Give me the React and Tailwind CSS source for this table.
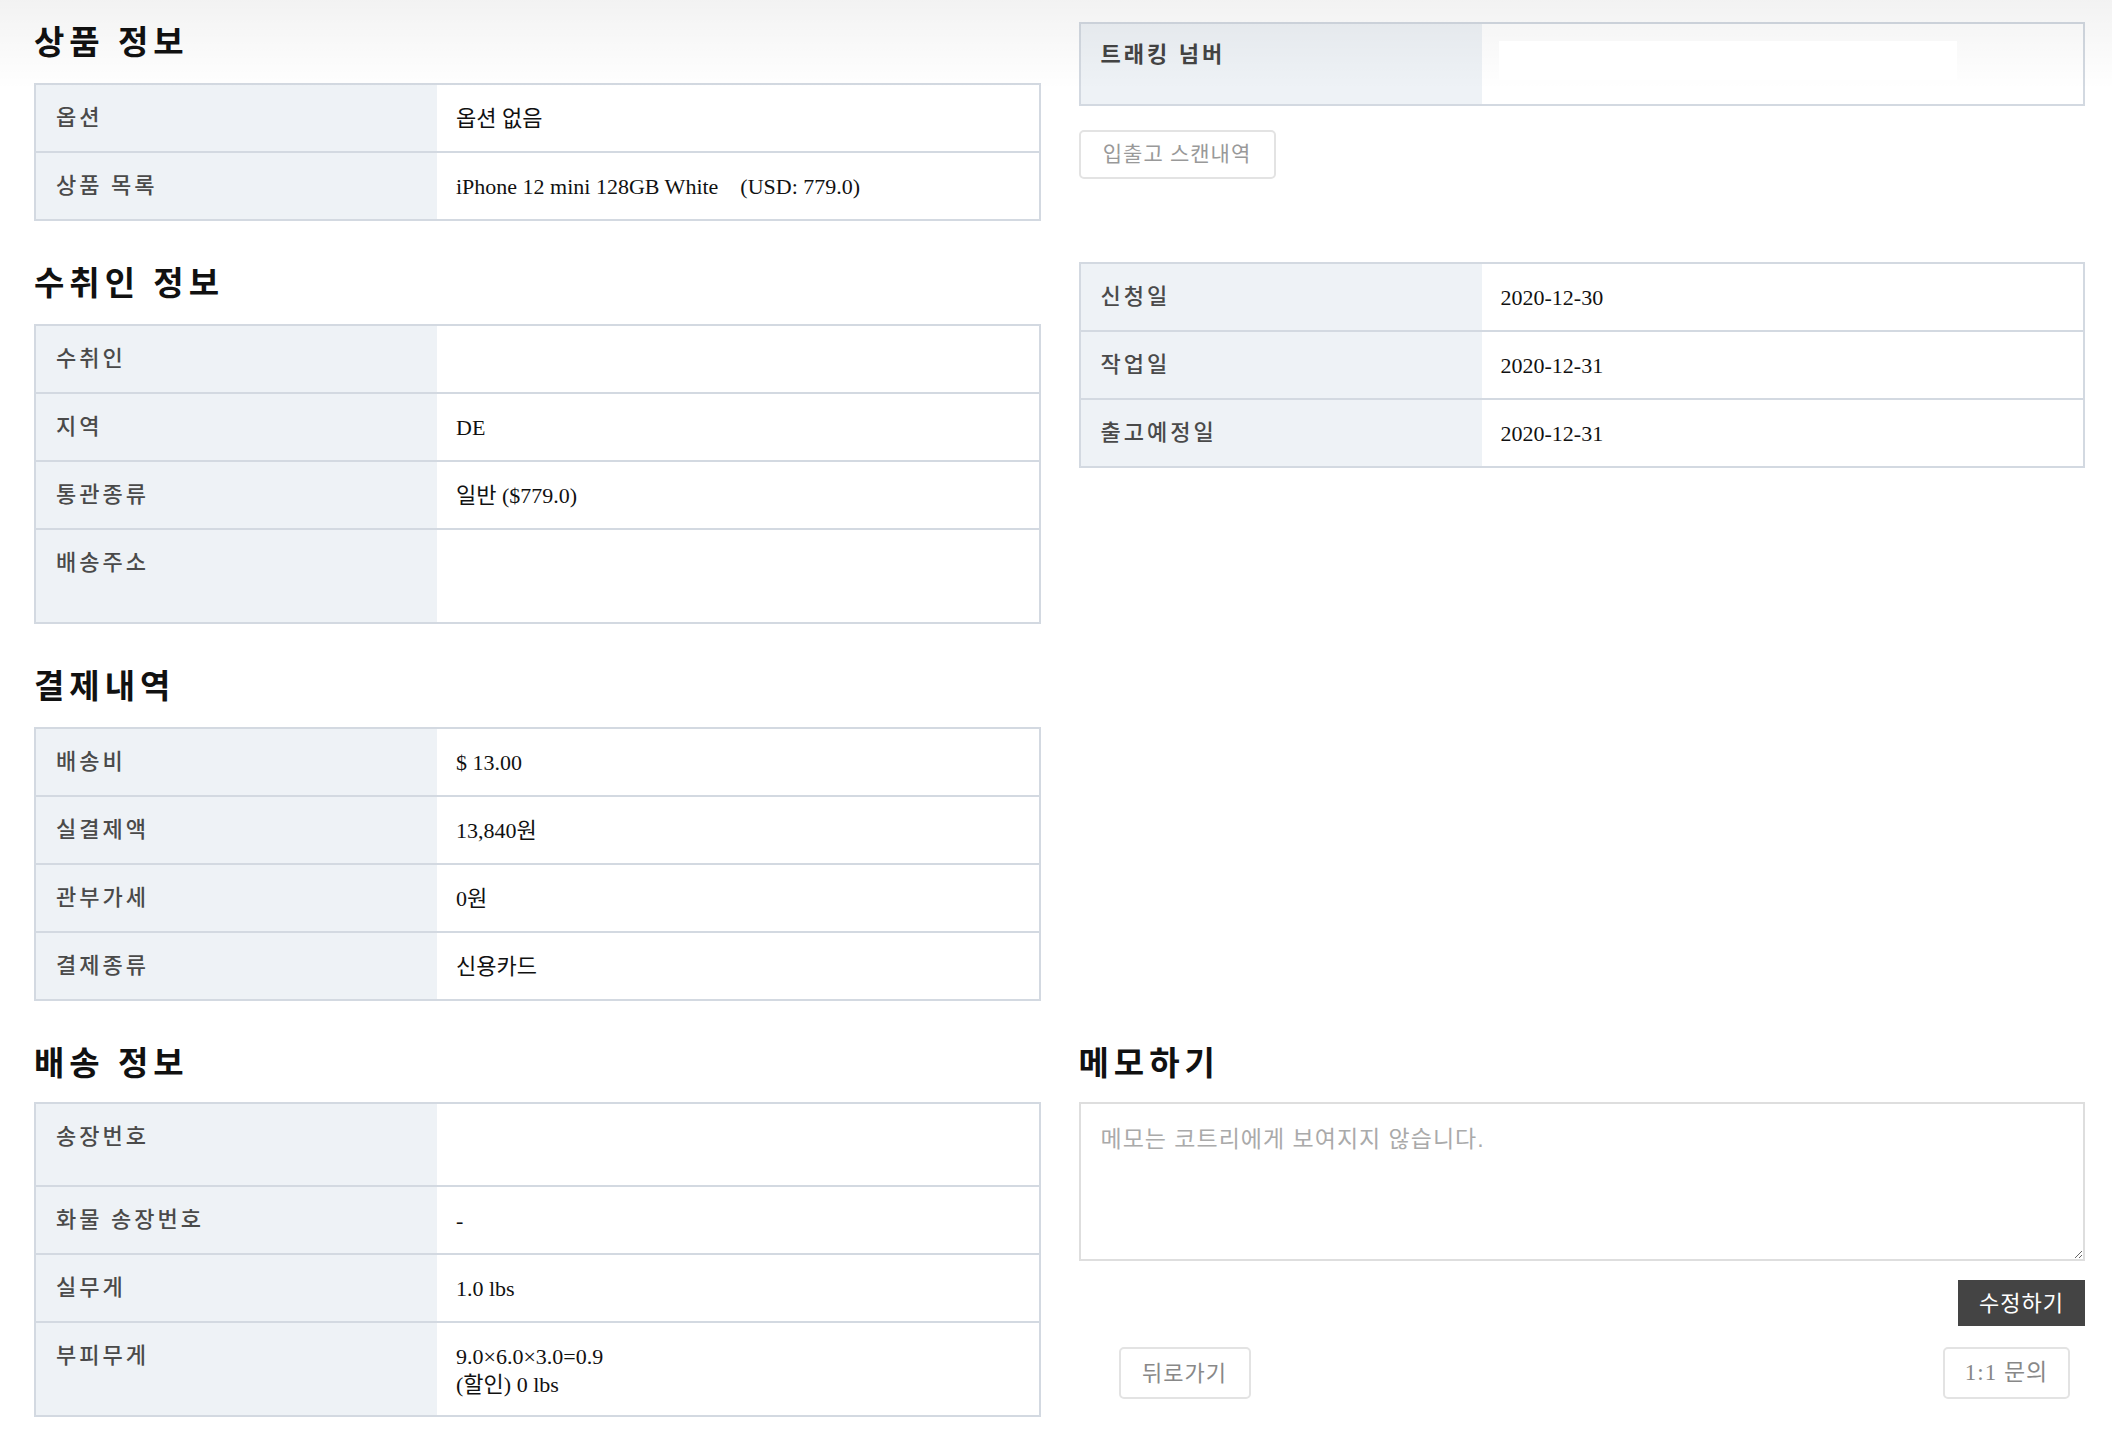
import React from 'react';

const InfoRow = ({ label, children, first = false, tall = '', bold = false }) => (
  <div
    className={`flex ${tall || (first ? 'h-[66px]' : 'h-[68px]')} ${first ? '' : 'border-t-2 border-[#d3d9e1]'}`}
  >
    <div
      className={`w-[401px] shrink-0 bg-[#eef2f6] px-[20px] pt-[19px] text-[22px] leading-[28px] tracking-[3px] ${
        bold ? 'font-bold text-[#444]' : 'font-medium text-[#4a4a4a]'
      }`}
    >
      {label}
    </div>
    <div className="flex-1 px-[19px] pt-[20px] text-[22px] leading-[28px] text-[#111]">{children}</div>
  </div>
);

const InfoTable = ({ rows, className = '' }) => (
  <div className={`border-2 border-[#d3d9e1] ${className}`}>
    {rows.map((r, i) => (
      <InfoRow key={r.label} label={r.label} first={i === 0} tall={r.tall}>
        {r.value}
      </InfoRow>
    ))}
  </div>
);

const Heading = ({ children, className = '' }) => (
  <h2 className={`h-[40px] shrink-0 text-[33px] font-bold leading-[44px] tracking-[5px] text-[#111] ${className}`}>
    {children}
  </h2>
);

const productRows = [
  { label: '옵션', value: '옵션 없음' },
  {
    label: '상품 목록',
    value: <span>iPhone 12 mini 128GB White&nbsp;&nbsp;&nbsp; (USD: 779.0)</span>,
  },
];

const receiverRows = [
  { label: '수취인', value: '' },
  { label: '지역', value: 'DE' },
  { label: '통관종류', value: '일반 ($779.0)' },
  { label: '배송주소', value: '', tall: 'h-[94px]' },
];

const paymentRows = [
  { label: '배송비', value: '$ 13.00' },
  { label: '실결제액', value: '13,840원' },
  { label: '관부가세', value: '0원' },
  { label: '결제종류', value: '신용카드' },
];

const shippingRows = [
  { label: '송장번호', value: '', tall: 'h-[81px]' },
  { label: '화물 송장번호', value: '-' },
  { label: '실무게', value: '1.0 lbs' },
  {
    label: '부피무게',
    tall: 'h-[94px]',
    value: (
      <>
        <div>9.0×6.0×3.0=0.9</div>
        <div>(할인) 0 lbs</div>
      </>
    ),
  },
];

const dateRows = [
  { label: '신청일', value: '2020-12-30' },
  { label: '작업일', value: '2020-12-31' },
  { label: '출고예정일', value: '2020-12-31' },
];

export default function App() {
  return (
    <div className="relative min-h-screen w-full overflow-hidden bg-white font-['Liberation_Serif','Noto_Sans_CJK_KR',serif] text-[#111]">
      {/* soft shade under the (hidden) header */}
      <div className="pointer-events-none absolute inset-x-0 top-0 z-10 h-[90px] bg-linear-to-b from-black/5 to-transparent" />

      <div className="grid grid-cols-2 gap-x-[38px] pl-[34px] pr-[27px] pt-[21px]">
        {/* left, upper */}
        <div className="flex flex-col">
          <Heading>상품 정보</Heading>
          <InfoTable rows={productRows} className="mt-[22px]" />

          <Heading className="mt-[41px]">수취인 정보</Heading>
          <InfoTable rows={receiverRows} className="mt-[22px]" />

          <Heading className="mt-[41px]">결제내역</Heading>
          <InfoTable rows={paymentRows} className="mt-[22px]" />
        </div>

        {/* right, upper */}
        <div className="flex flex-col items-start">
          <div className="mt-[1px] w-full border-2 border-[#d3d9e1]">
            <div className="flex h-[80px]">
              <div className="w-[401px] shrink-0 bg-[#eef2f6] px-[20px] pt-[17px] text-[22px] font-bold leading-[28px] tracking-[3px] text-[#444]">
                트래킹 넘버
              </div>
              <div className="flex-1 pl-[17px] pt-[17px]">
                <div className="relative z-20 h-[39px] w-[458px] bg-white" />
              </div>
            </div>
          </div>

          <button className="mt-[24px] flex h-[49px] w-[197px] items-center justify-center rounded-[5px] border-2 border-[#e3e3e3] bg-white text-[21px] tracking-[1px] text-[#999]">
            입출고 스캔내역
          </button>

          <InfoTable rows={dateRows} className="mt-[83px] w-full" />
        </div>

        {/* left, lower */}
        <div className="mt-[41px] flex flex-col">
          <Heading>배송 정보</Heading>
          <InfoTable rows={shippingRows} className="mt-[20px]" />
        </div>

        {/* right, lower */}
        <div className="mt-[41px] flex flex-col">
          <Heading>메모하기</Heading>
          <textarea
            className="mt-[20px] block h-[159px] w-full border-2 border-[#dedede] px-[20px] pt-[21px] font-['Liberation_Sans','Noto_Sans_CJK_KR',sans-serif] text-[23px] leading-[28px] tracking-[1px] text-[#333] outline-none placeholder:text-[#aaa]"
            placeholder="메모는 코트리에게 보여지지 않습니다."
          />
          <div className="mt-[19px] flex justify-end">
            <button className="h-[46px] w-[127px] bg-[#444] text-[22px] tracking-[1px] text-white">수정하기</button>
          </div>
          <div className="mt-[21px] flex items-center justify-between">
            <button className="ml-[40px] flex h-[52px] w-[132px] items-center justify-center rounded-[5px] border-2 border-[#e3e3e3] bg-white text-[22px] tracking-[1px] text-[#888]">
              뒤로가기
            </button>
            <button className="mr-[15px] flex h-[52px] w-[127px] items-center justify-center rounded-[5px] border-2 border-[#e3e3e3] bg-white text-[23px] tracking-[1px] text-[#888]">
              1:1 문의
            </button>
          </div>
        </div>
      </div>
    </div>
  );
}
